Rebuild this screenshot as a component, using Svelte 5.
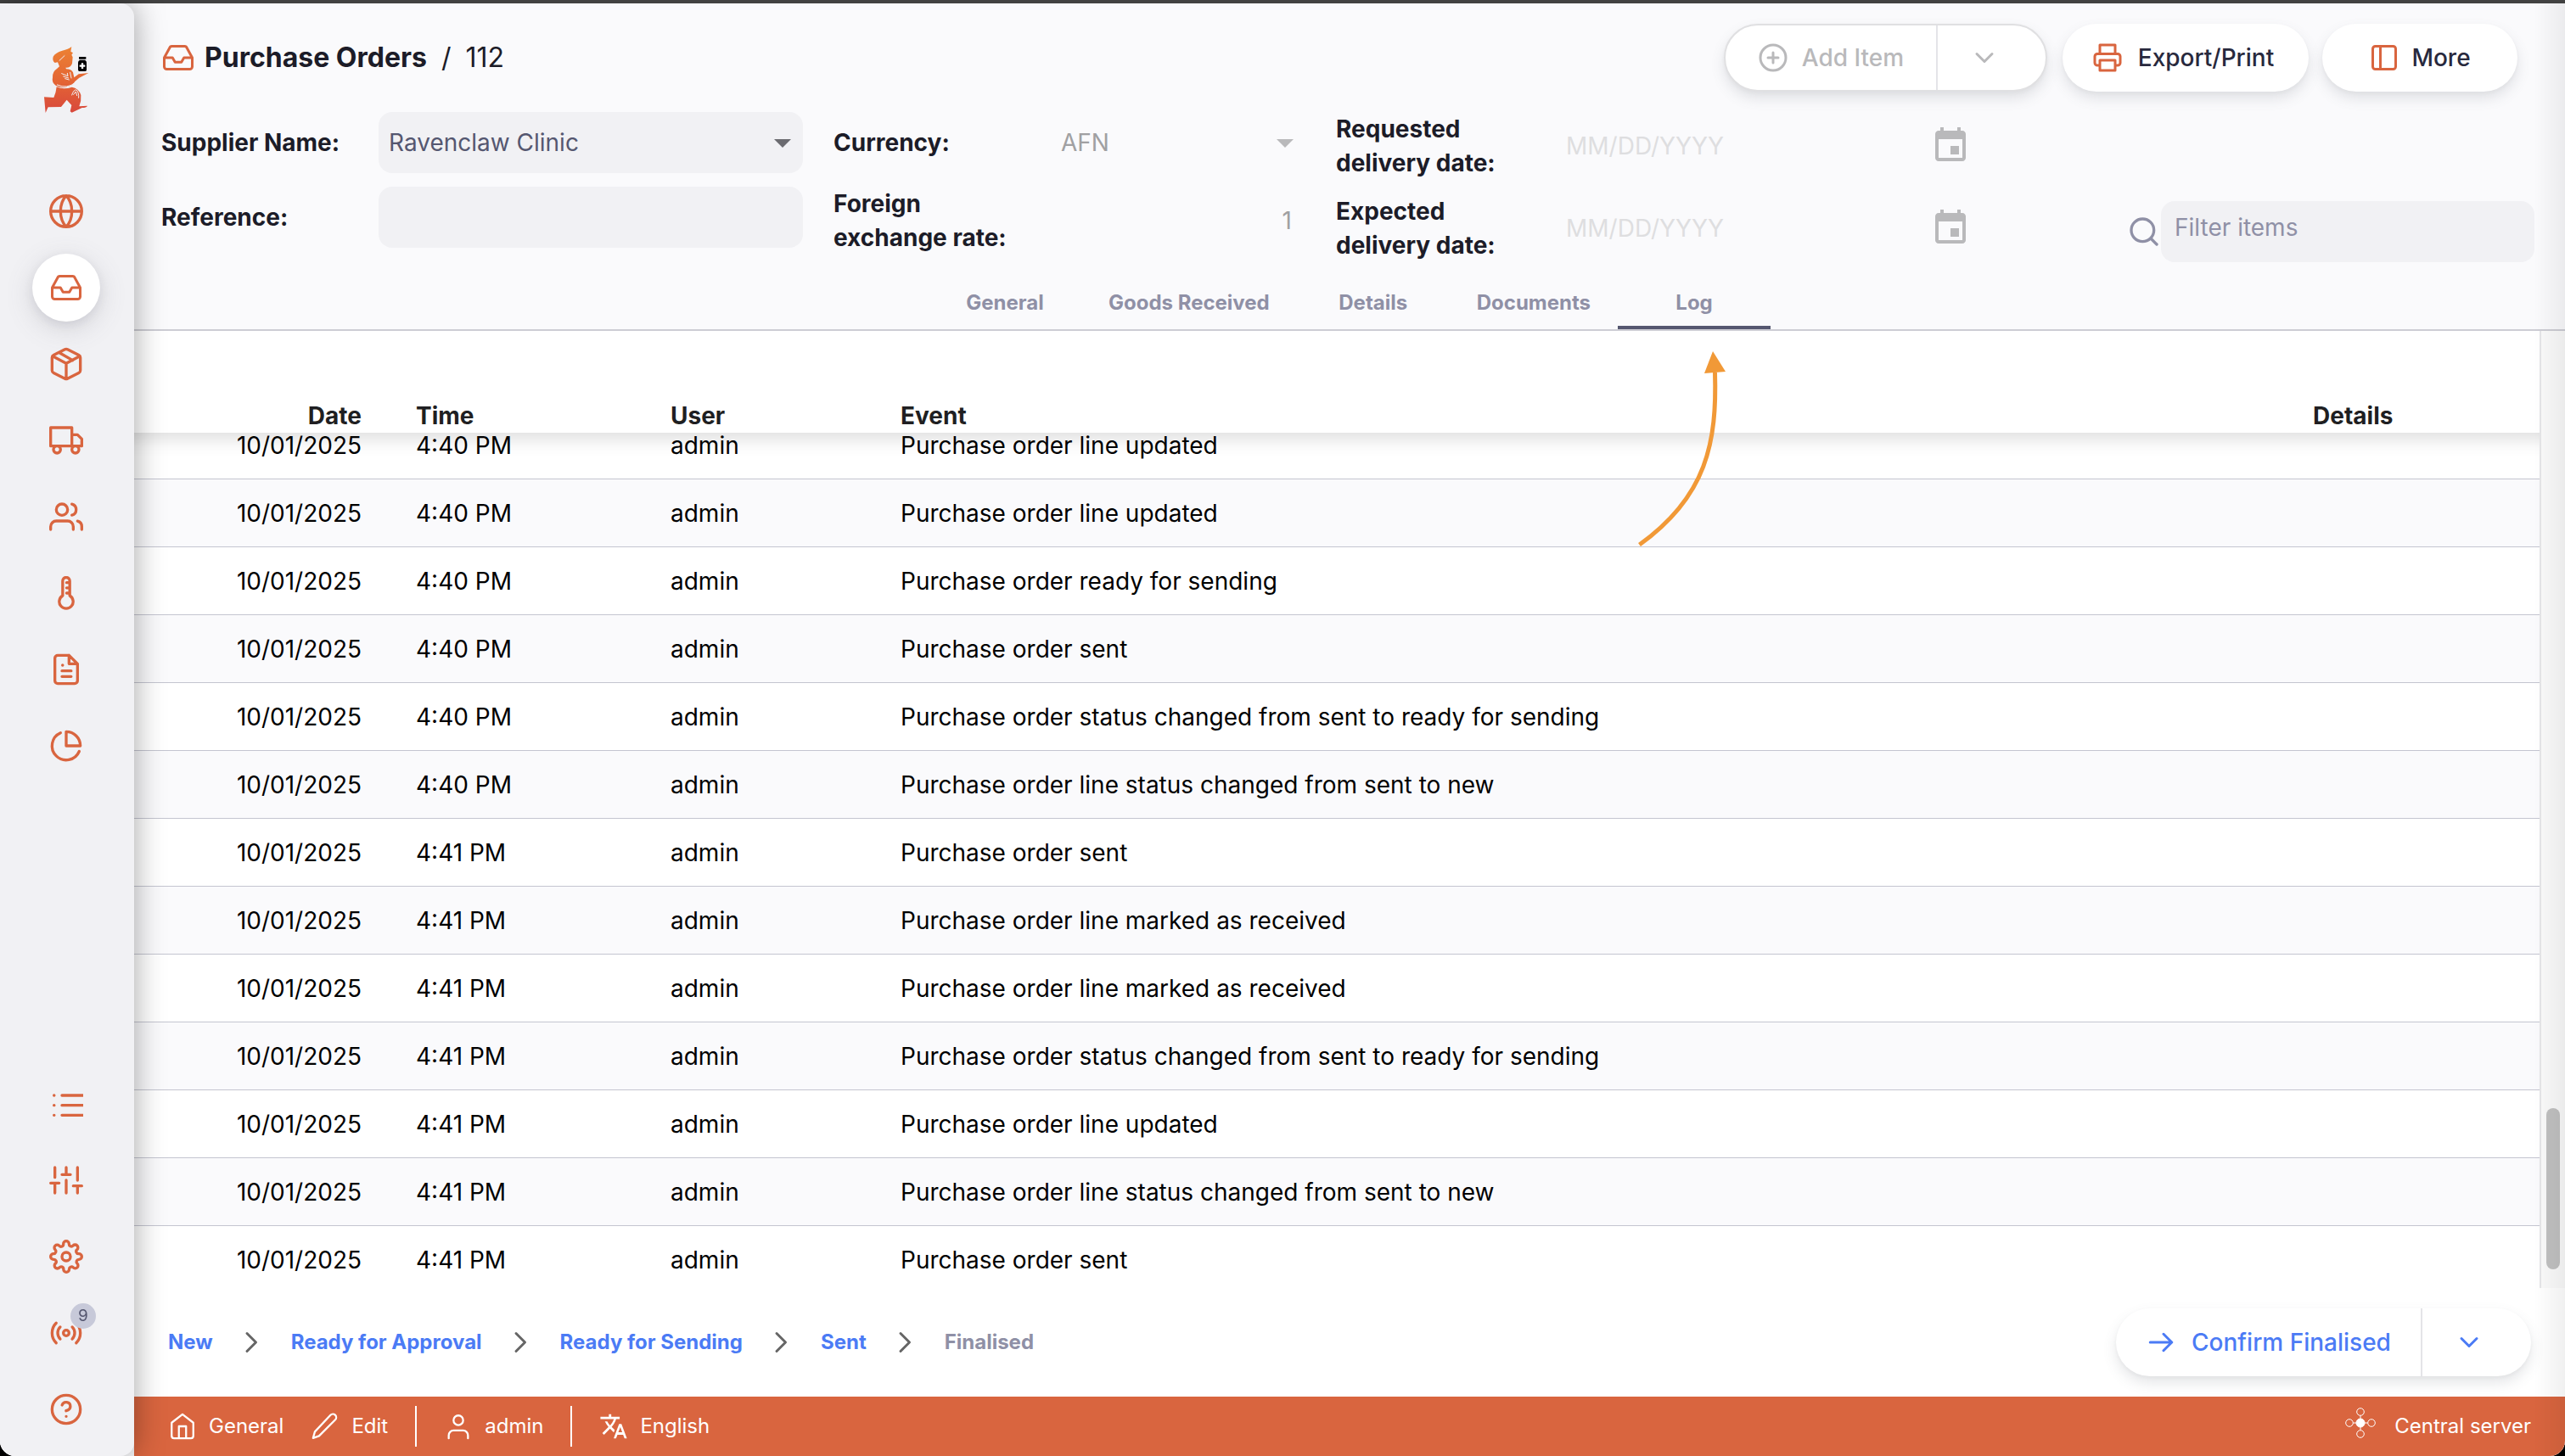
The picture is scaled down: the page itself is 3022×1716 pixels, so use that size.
<script>
  import { onMount } from 'svelte';

  const topNav = ['globe', 'inbox', 'package', 'truck', 'users', 'thermometer', 'file', 'pie'];
  const bottomNav = ['list', 'sliders', 'settings', 'radio', 'help'];
  const tabs = ['General', 'Goods Received', 'Details', 'Documents', 'Log'];
  const statuses = ['New', 'Ready for Approval', 'Ready for Sending', 'Sent', 'Finalised'];
  const log = [
    ['4:40 PM', 'Purchase order line updated'],
    ['4:40 PM', 'Purchase order line updated'],
    ['4:40 PM', 'Purchase order ready for sending'],
    ['4:40 PM', 'Purchase order sent'],
    ['4:40 PM', 'Purchase order status changed from sent to ready for sending'],
    ['4:40 PM', 'Purchase order line status changed from sent to new'],
    ['4:41 PM', 'Purchase order sent'],
    ['4:41 PM', 'Purchase order line marked as received'],
    ['4:41 PM', 'Purchase order line marked as received'],
    ['4:41 PM', 'Purchase order status changed from sent to ready for sending'],
    ['4:41 PM', 'Purchase order line updated'],
    ['4:41 PM', 'Purchase order line status changed from sent to new'],
    ['4:41 PM', 'Purchase order sent'],
  ];

  const icons = {
    globe: 'M12 1a11 11 0 1 0 0 22a11 11 0 1 0 0-22zM1 12h22M12 1c3 3.2 4 7 4 11s-1 7.800-4 11c-3-3.200-4-7-4-11s1-7.800 4-11z',
    inbox: 'M23 12h-6.500l-2 3.500h-5l-2-3.500H1M5.200 4.400L1 12v7a2 2 0 0 0 2 2h18a2 2 0 0 0 2-2v-7l-4.200-7.600A2 2 0 0 0 17 3H7a2 2 0 0 0-1.800 1.400z',
    package: 'M16.500 9.400L7.500 4.210M22 16.500v-9a2 2 0 0 0-1.100-1.800l-8-4a2 2 0 0 0-1.800 0l-8 4A2 2 0 0 0 2 7.500v9a2 2 0 0 0 1.100 1.800l8 4a2 2 0 0 0 1.800 0l8-4a2 2 0 0 0 1.100-1.800zM2.400 6.500L12 11.500l9.600-5M12 22.500v-11',
    truck: 'M1 3h15v13H1zM16 8h4l3 3v5h-7zM5.500 16a2.500 2.500 0 1 0 0 5a2.500 2.500 0 1 0 0-5zM18.500 16a2.500 2.500 0 1 0 0 5a2.500 2.500 0 1 0 0-5z',
    users: 'M17 21v-2a4 4 0 0 0-4-4H5a4 4 0 0 0-4 4v2M9 3a4 4 0 1 0 0 8a4 4 0 1 0 0-8zM23 21v-2a4 4 0 0 0-3-3.870M16 3.130a4 4 0 0 1 0 7.750',
    thermometer: 'M9.500 13.800V3.400a2.500 2.500 0 0 1 5 0v10.400a4.900 4.900 0 1 1-5 0zM12.300 4.600h2M12.300 8.300h2M12.300 12h2',
    file: 'M14 2H6a2 2 0 0 0-2 2v16a2 2 0 0 0 2 2h12a2 2 0 0 0 2-2V8l-6-6v6h6M15.500 13H9M15.500 17H9M9.500 9H9.400',
    pie: 'M21.210 15.890A10 10 0 1 1 8 2.830M22 12A10 10 0 0 0 12 2v10z',
    list: 'M9 6h16M9 13h16M9 20h16M3.400 6h.1M3.400 13h.1M3.400 20h.1',
    sliders: 'M4 21v-7M4 10V3M12 21v-9M12 8V3M20 21v-5M20 12V3M1 14h6M9 8h6M17 16h6',
    settings: 'M12 9a3 3 0 1 0 0 6a3 3 0 1 0 0-6zM19.400 15a1.650 1.650 0 0 0 .33 1.820l.06.06a2 2 0 1 1-2.830 2.830l-.06-.06a1.650 1.650 0 0 0-2.800 1.170V21a2 2 0 0 1-4 0v-.09a1.650 1.650 0 0 0-2.900-1.180l-.06.06a2 2 0 1 1-2.830-2.830l.06-.06A1.650 1.650 0 0 0 3.090 14H3a2 2 0 0 1 0-4h.09a1.650 1.650 0 0 0 1.180-2.820l-.06-.06a2 2 0 1 1 2.830-2.830l.06.06A1.650 1.650 0 0 0 10 3.090V3a2 2 0 0 1 4 0v.09a1.650 1.650 0 0 0 2.820 1.180l.06-.06a2 2 0 1 1 2.830 2.830l-.06.06A1.650 1.650 0 0 0 20.910 10H21a2 2 0 0 1 0 4h-.09a1.650 1.650 0 0 0-1.510 1z',
    radio: 'M12 10a2 2 0 1 0 0 4a2 2 0 1 0 0-4zM16.240 7.760a6 6 0 0 1 0 8.490M7.760 16.240a6 6 0 0 1 0-8.490M19.070 4.930a10 10 0 0 1 0 14.140M4.930 19.070a10 10 0 0 1 0-14.140',
    help: 'M12 2a10 10 0 1 0 0 20a10 10 0 1 0 0-20zM9.090 9a3 3 0 0 1 5.830 1c0 2-3 3-3 3M12 17h.01',
    plus: 'M12 2a10 10 0 1 0 0 20a10 10 0 1 0 0-20zM12 8v8M8 12h8',
    down: 'M6 9l6 6 6-6',
    right: 'M8 5l7 7-7 7',
    arrow: 'M3.500 12h17M14 5.500l6.500 6.500-6.500 6.500',
    printer: 'M6 9V2h12v7M6 18H4a2 2 0 0 1-2-2v-5a2 2 0 0 1 2-2h16a2 2 0 0 1 2 2v5a2 2 0 0 1-2 2h-2M6 14h12v8H6z',
    panel: 'M5 3h14a2 2 0 0 1 2 2v14a2 2 0 0 1-2 2H5a2 2 0 0 1-2-2V5a2 2 0 0 1 2-2zM9 3v18',
    search: 'M11 3a8 8 0 1 0 0 16a8 8 0 1 0 0-16zM21 21l-4.350-4.350',
    home: 'M3 9l9-7 9 7v11a2 2 0 0 1-2 2H5a2 2 0 0 1-2-2zM9 22V12h6v10',
    edit: 'M16.500 2.700a2.500 2.500 0 0 1 4 3.800L7 20l-5 1.800L3.500 16.500z',
    user: 'M20 22v-2.500a4 4 0 0 0-4-4H8a4 4 0 0 0-4 4V22M12 3a4 4 0 1 0 0 8a4 4 0 1 0 0-8z',
  };

  let scroller;
  onMount(() => {
    scroller.scrollTop = 25;
  });
</script>

{#snippet icon(name, cls)}
  <svg class="icon {cls}" viewBox="0 0 24 24" aria-hidden="true"><path d={icons[name]} /></svg>
{/snippet}

{#snippet calendar()}
  <svg class="cal" viewBox="0 0 24 24" aria-hidden="true">
    <path d="M17 12h-5v5h5v-5zM16 1v2H8V1H6v2H5c-1.110 0-1.990.9-1.990 2L3 19c0 1.100.89 2 2 2h14c1.100 0 2-.9 2-2V5c0-1.100-.9-2-2-2h-1V1h-2zm3 18H5V8h14v11z" />
  </svg>
{/snippet}

<div class="window">
  <div class="strip"></div>
  <div class="shell">
    <aside>
      <a class="logo" href="#home" aria-label="Home">
        <svg viewBox="0 0 240 300">
          <defs>
            <linearGradient id="flame" x1="0" y1="0" x2="0" y2="1">
              <stop offset="0" stop-color="#ec8233" />
              <stop offset="0.5" stop-color="#e46634" />
              <stop offset="1" stop-color="#d8483c" />
            </linearGradient>
          </defs>
          <path fill="url(#flame)" d="M133 33L130 50L138 55L133 62L137 70L135 92Q130 108 112 107L114 112Q132 112 138 124L142 142L158 130L193 126L160 143L145 156Q138 170 122 173Q96 182 77 170Q62 160 66 142Q64 122 82 110L90 103L84 88L74 90Q64 82 68 68Q76 54 100 47Q122 42 133 33zM80 175Q104 186 134 176Q158 180 166 204Q168 224 160 244L189 242Q186 249 170 249L134 266L128 262L133 240L116 221L96 246L50 247L41 267L36 211L70 213Q78 196 80 175z" />
          <path fill="none" stroke="#f1f1f4" stroke-width="3" stroke-linecap="round" d="M90 82L108 65M82 168Q118 184 146 160M98 128L120 137L118 127M104 138L122 144M110 146L124 150M132 144L128 124M134 204Q140 184 150 186Q160 196 158 214M140 202L148 192L152 206" />
          <path d="M159 69h25v8h-25zM162 80h18q6 3 6 9v26q0 5-5 5h-20q-5 0-5-5v-26q0-6 6-9z" />
          <path fill="none" stroke="#fff" stroke-width="7" d="M171 91v20M161 101h20" />
        </svg>
      </a>
      <nav aria-label="Sections">
        {#each topNav as name}
          <button class:active={name === 'inbox'} aria-label={name}>
            <span class="disc">{@render icon(name, name === 'inbox' ? 'm' : 'l')}</span>
          </button>
        {/each}
      </nav>
      <nav class="low" aria-label="Tools">
        {#each bottomNav as name}
          <button aria-label={name}>
            <span class="disc">
              {@render icon(name, 'l')}
              {#if name === 'radio'}<span class="badge">9</span>{/if}
            </span>
          </button>
        {/each}
      </nav>
    </aside>

    <main>
      <header>
        <div class="titlebar">
          <h1>
            {@render icon('inbox', 'm accent')}
            <a href="#orders">Purchase Orders</a>
            <span>/</span>
            <span>112</span>
          </h1>
          <div class="actions">
            <div class="split disabled">
              <button class="main-part" disabled>{@render icon('plus', 'm')}Add Item</button>
              <button class="drop-part" disabled aria-label="Add options">{@render icon('down', 'm')}</button>
            </div>
            <button class="pill export">{@render icon('printer', 'm accent')}Export/Print</button>
            <button class="pill more">{@render icon('panel', 'm accent')}More</button>
          </div>
        </div>

        <div class="fields">
          <div class="group first">
            <label for="supplier">Supplier Name:</label>
            <div class="select">
              <select id="supplier"><option>Ravenclaw Clinic</option></select>
              <svg class="tri" viewBox="0 0 20 10" aria-hidden="true"><path d="M0 0h20L10 10z" /></svg>
            </div>
            <label for="reference">Reference:</label>
            <input id="reference" class="box" type="text" />
          </div>
          <div class="group second">
            <label for="currency">Currency:</label>
            <div class="select plain">
              <select id="currency" disabled><option>AFN</option></select>
              <svg class="tri" viewBox="0 0 20 10" aria-hidden="true"><path d="M0 0h20L10 10z" /></svg>
            </div>
            <label for="rate">Foreign<br />exchange rate:</label>
            <input id="rate" class="rate" type="text" value="1" disabled />
          </div>
          <div class="group third">
            <label for="requested">Requested<br />delivery date:</label>
            <div class="date">
              <input id="requested" type="text" placeholder="MM/DD/YYYY" disabled />
              <button disabled aria-label="Choose requested date">{@render calendar()}</button>
            </div>
            <label for="expected">Expected<br />delivery date:</label>
            <div class="date">
              <input id="expected" type="text" placeholder="MM/DD/YYYY" disabled />
              <button disabled aria-label="Choose expected date">{@render calendar()}</button>
            </div>
          </div>
          <div class="filter">
            <label for="filter" aria-label="Filter items">{@render icon('search', 'l')}</label>
            <input id="filter" class="box" type="text" placeholder="Filter items" />
          </div>
        </div>

        <div class="tabs" role="tablist">
          {#each tabs as tab}
            <button role="tab" aria-selected={tab === 'Log'} class:current={tab === 'Log'}>
              {tab}
              {#if tab === 'Log'}
                <svg class="pointer" viewBox="0 0 120 240" aria-hidden="true">
                  <path class="shaft" d="M97.500 28C100 110 88 174 8.500 231" />
                  <path class="tip" d="M95 3L110 27L85 29z" />
                </svg>
              {/if}
            </button>
          {/each}
        </div>
      </header>

      <section class="log">
        <div class="scroll" bind:this={scroller}>
          <table>
            <colgroup>
              <col class="c-date" /><col class="c-time" /><col class="c-user" /><col /><col class="c-details" />
            </colgroup>
            <thead>
              <tr><th class="num">Date</th><th>Time</th><th>User</th><th>Event</th><th>Details</th></tr>
            </thead>
            <tbody>
              {#each log as [time, event]}
                <tr><td class="num">10/01/2025</td><td>{time}</td><td>admin</td><td>{event}</td><td></td></tr>
              {/each}
            </tbody>
          </table>
        </div>
        <div class="track"><div class="thumb"></div></div>
      </section>

      <div class="statusbar">
        <ol>
          {#each statuses as status, i}
            <li class:pending={i === statuses.length - 1}>
              {#if i > 0}{@render icon('right', 'm')}{/if}
              {status}
            </li>
          {/each}
        </ol>
        <div class="split confirm">
          <button class="main-part">{@render icon('arrow', 'm')}Confirm Finalised</button>
          <button class="drop-part" aria-label="Status options">{@render icon('down', 'm')}</button>
        </div>
      </div>

      <footer>
        <a href="#store">{@render icon('home', 's')}General</a>
        <a class="edit" href="#edit">{@render icon('edit', 's')}Edit</a>
        <a class="ruled" href="#user">{@render icon('user', 's')}admin</a>
        <a class="ruled" href="#language">
          <svg class="glyph" viewBox="0 0 24 24" aria-hidden="true">
            <path d="M12.870 15.070l-2.540-2.510.03-.03c1.740-1.940 2.980-4.170 3.710-6.530H17V4h-7V2H8v2H1v1.990h11.170C11.500 7.920 10.440 9.750 9 11.350 8.070 10.320 7.300 9.190 6.690 8h-2c.73 1.630 1.730 3.170 2.980 4.560l-5.090 5.020L4 19l5-5 3.110 3.110.76-2.040zM18.500 10h-2L12 22h2l1.120-3h4.750L21 22h2l-4.500-12zm-2.620 7l1.620-4.330L19.120 17h-3.240z" />
          </svg>English
        </a>
        <span class="server">
          <svg viewBox="0 0 36 36" aria-hidden="true">
            <circle class="hub" cx="18" cy="18" r="5" />
            <path d="M18 9.500v17M9.500 18h17" />
            <circle cx="18" cy="5" r="4.300" /><circle cx="18" cy="31" r="4.300" />
            <circle cx="5" cy="18" r="4.300" /><circle cx="31" cy="18" r="4.300" />
          </svg>
          <span>Central server</span>
        </span>
      </footer>
      <div class="edge"></div>
    </main>
  </div>
</div>

<style>
  :global(body) { background: #000; }
  .window, .window * { box-sizing: border-box; }
  .window {
    height: 100vh;
    display: flex;
    flex-direction: column;
    overflow: hidden;
    border-radius: 0 0 18px 18px;
    background: #fff;
    color: #1c1c28;
    font: 28px/40px Inter, sans-serif;
  }
  button, input, select { font: inherit; color: inherit; border: 0; background: none; padding: 0; margin: 0; }
  button { display: flex; align-items: center; }
  input, select { min-width: 0; width: 100%; outline: 0; opacity: 1; }
  a { color: inherit; text-decoration: none; }

  .icon { fill: none; stroke: currentColor; stroke-width: 2; stroke-linecap: round; stroke-linejoin: round; flex: none; }
  .icon.l { width: 40px; height: 40px; }
  .icon.m { width: 36px; height: 36px; }
  .icon.s { width: 34px; height: 34px; stroke-width: 1.6; }
  .icon.accent { color: #d9653f; }

  .strip { height: 4px; flex: none; background: #424242; }
  .shell { flex: 1; min-height: 0; display: flex; background: #fafafc; }

  aside {
    width: 158px;
    flex: none;
    display: flex;
    flex-direction: column;
    padding-bottom: 10px;
    position: relative;
    z-index: 3;
    background: #f1f1f4;
    border-radius: 0 16px 16px 0;
    box-shadow: 0 0 36px rgba(0, 0, 0, 0.36);
    color: #d9653f;
  }
  .logo { height: 200px; padding: 40px 0 0 40px; flex: none; }
  .logo svg { width: 80px; height: 100px; display: block; }
  aside nav { padding-right: 2px; }
  nav button { width: 100%; height: 90px; justify-content: center; }
  .low { margin-top: auto; }
  .disc { position: relative; width: 80px; height: 80px; display: grid; place-items: center; border-radius: 50%; }
  .active .disc { background: #fff; box-shadow: 0 8px 32px rgba(96, 97, 112, 0.2), 0 4px 12px rgba(40, 41, 61, 0.08); }
  .badge {
    position: absolute;
    left: 45px;
    top: 5px;
    width: 30px;
    height: 30px;
    border-radius: 50%;
    background: #c7c9d9;
    color: #555770;
    font-size: 19px;
    line-height: 30px;
    text-align: center;
  }

  main { flex: 1; min-width: 0; display: flex; flex-direction: column; position: relative; }
  header { flex: none; padding-top: 24px; border-bottom: 2px solid #cdcdd4; background: #fafafc; }
  .titlebar { display: flex; justify-content: space-between; padding: 0 56px 0 34px; height: 80px; }
  h1 { margin: 0; display: flex; align-items: center; gap: 17px; font-size: 32px; font-weight: 400; }
  h1 a { font-weight: 700; margin-left: -4px; }
  .actions { display: flex; }
  .pill, .split { height: 80px; border-radius: 48px; background: #fff; box-shadow: 0 8px 16px rgba(96, 97, 112, 0.16), 0 2px 4px rgba(40, 41, 61, 0.04); }
  .pill { color: #28293d; font-weight: 500; justify-content: center; margin-left: 16px; }
  .export { gap: 18px; width: 290px; margin-left: 18px; padding-right: 6px; }
  .more { gap: 14px; width: 230px; }
  .split { display: flex; }
  .split .main-part { justify-content: center; font-weight: 500; }
  .split .drop-part { justify-content: center; border-left: 2px solid #e4e4e8; }
  .disabled { border: 2px solid #e0e0e2; color: #b9b9bb; }
  .disabled .main-part { width: 248px; gap: 16px; }
  .disabled .drop-part { width: 129px; padding-right: 18px; }
  .confirm { color: #4b7bf5; }
  .confirm .main-part { width: 359px; gap: 18px; }
  .confirm .drop-part { width: 130px; padding-right: 18px; }

  .fields {
    display: grid;
    grid-template-columns: 756fr 556fr 742fr 634fr;
    column-gap: 36px;
    padding: 24px 36px 14px 32px;
  }
  .group { display: grid; align-items: center; align-content: start; row-gap: 16px; }
  .group label { font-weight: 700; }
  .first { grid-template-columns: 256px 1fr; }
  .second { grid-template-columns: 256px 1fr; }
  .third { grid-template-columns: 260px 1fr; row-gap: 17px; }
  .box, .select { height: 72px; border-radius: 16px; background: #f1f1f4; color: #555770; }
  .box, .select select { padding: 0 12px; }
  .select { position: relative; }
  .select select { height: 100%; appearance: none; }
  .tri { position: absolute; right: 14px; top: 32px; width: 20px; height: 10px; fill: #6b6b70; }
  .plain { background: none; color: #a0a0a2; }
  .plain .tri { fill: #b9b9bb; }
  .rate { height: 80px; text-align: right; padding-right: 16px; color: #a0a0a2; }
  .date { display: flex; align-items: center; height: 80px; padding-left: 11px; }
  .cal { width: 48px; height: 48px; fill: #b9b9bb; display: block; margin-right: -6px; }
  .date input::placeholder { color: #dedee0; opacity: 1; }
  .filter { display: flex; align-items: center; align-self: end; justify-content: flex-end; color: #8f90a6; }
  .filter label { display: flex; }
  .filter .box { width: 440px; padding: 0 16px 10px; }
  .filter .box::placeholder { color: #8f90a6; opacity: 1; }

  .tabs { display: flex; justify-content: center; height: 65px; }
  .tabs button {
    min-width: 180px;
    padding: 6px 32px 0;
    justify-content: center;
    border-bottom: 4px solid transparent;
    color: #8f90a6;
    font-size: 24px;
    font-weight: 700;
    position: relative;
  }
  .tabs .current { border-bottom-color: #555770; }
  .pointer { position: absolute; left: 17px; top: 88px; width: 120px; height: 240px; z-index: 2; }
  .shaft { fill: none; stroke: #f19937; stroke-width: 5; }
  .tip { fill: #f19937; }

  .log { flex: 1; min-height: 0; display: flex; background: #fff; }
  .scroll { flex: 1; overflow: auto; scrollbar-width: none; }
  table { width: 100%; table-layout: fixed; border-collapse: separate; border-spacing: 0; color: #000; }
  .c-date { width: 300px; }
  .c-time { width: 300px; }
  .c-user { width: 271px; }
  .c-details { width: 299px; }
  th {
    position: sticky;
    top: 0;
    z-index: 1;
    height: 120px;
    padding: 0 32px;
    vertical-align: bottom;
    text-align: left;
    background: #fff;
    color: #1f1f22;
  }
  th::after {
    content: '';
    position: absolute;
    left: 0;
    right: 0;
    top: 100%;
    height: 28px;
    background: linear-gradient(rgba(0, 0, 0, 0.1), rgba(0, 0, 0, 0.02) 60%, transparent);
  }
  td { height: 80px; padding: 0 32px; border-bottom: 1px solid #c4c5d0; }
  .num { text-align: right; }
  tbody tr:nth-child(even) { background: #fafafc; }
  .track {
    width: 30px;
    flex: none;
    display: flex;
    flex-direction: column;
    justify-content: flex-end;
    padding: 0 6px 22px;
    border-left: 2px solid #e6e6e8;
    background: #fafafa;
  }
  .thumb { height: 190px; border-radius: 8px; background: #c1c1c1; }

  .statusbar { flex: none; height: 128px; display: flex; align-items: center; justify-content: space-between; padding: 0 40px; background: #fff; }
  ol { list-style: none; margin: 0; padding: 0; display: flex; font-size: 24px; font-weight: 700; color: #4b7bf5; }
  li { display: flex; align-items: center; }
  li .icon { margin: 0 28px; color: #666; }
  .pending { color: #8f90a6; }

  footer { flex: none; height: 70px; display: flex; align-items: center; padding: 0 40px; background: #d9653f; color: #fff; font-size: 24px; }
  footer a { display: flex; align-items: center; gap: 14px; height: 48px; }
  .edit { margin-left: 32px; }
  .ruled { margin-left: 32px; padding-left: 32px; border-left: 2px solid #fff; }
  .glyph { width: 34px; height: 34px; fill: #fff; }
  .server { margin-left: auto; display: flex; align-items: center; gap: 22px; }
  .server svg { width: 36px; height: 36px; fill: none; stroke: #fff; margin-bottom: 8px; }
  .server .hub { fill: #fff; }

  .edge {
    position: absolute;
    inset: 0 0 0 auto;
    width: 36px;
    z-index: 3;
    pointer-events: none;
    background: linear-gradient(to right, transparent, rgba(0, 0, 0, 0.06));
  }
</style>
